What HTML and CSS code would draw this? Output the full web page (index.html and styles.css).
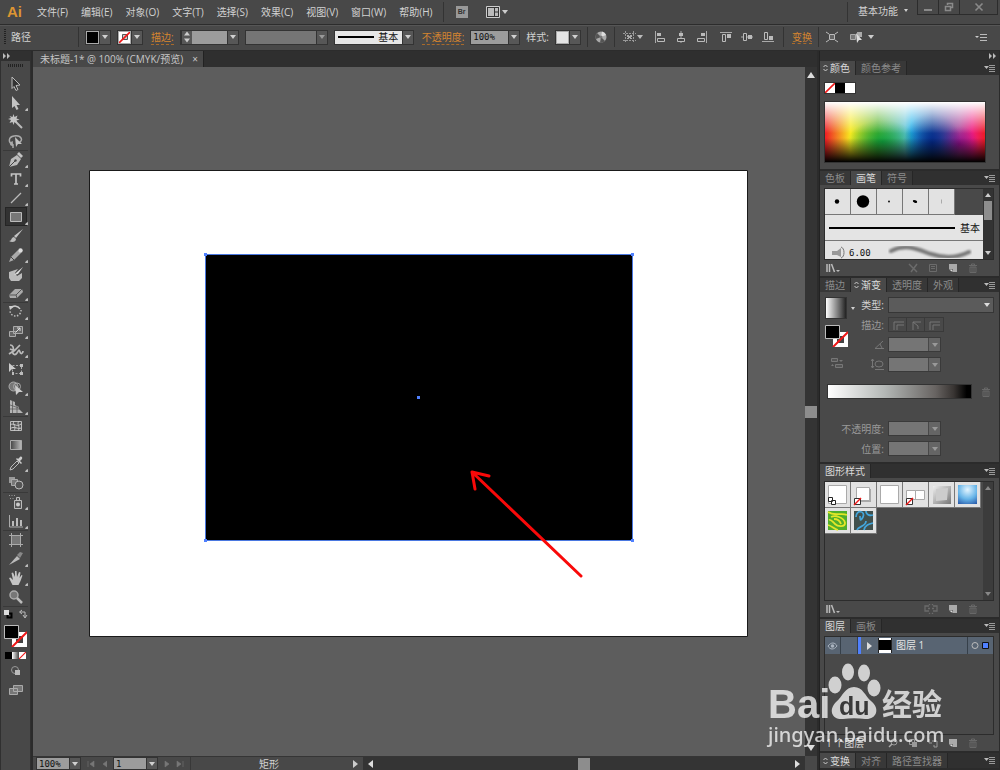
FILE: index.html
```html
<!DOCTYPE html>
<html lang="zh-CN">
<head>
<meta charset="utf-8">
<title>未标题-1</title>
<link rel="stylesheet" href="styles.css">
</head>
<body>
<svg class="sprite" aria-hidden="true">
  <symbol id="flyout" viewBox="0 0 12 8"><path d="M0 2h5L2.500 5z" fill="#bbb"/><path d="M5 1.500h6M5 3.500h6M5 5.500h6M5 7.500h6" stroke="#999"/></symbol>
  <symbol id="updown" viewBox="0 0 5 8"><path d="M.5 3l2-2 2 2M.5 5l2 2 2-2" fill="none" stroke="#ccc"/></symbol>
  <symbol id="library" viewBox="0 0 14 10"><path d="M1 1v8M3.500 1v8M5.500 1l3 8" stroke="#bbb" stroke-width="1.500"/><path d="M10 7h4l-2 2z" fill="#bbb"/></symbol>
  <symbol id="newitem" viewBox="0 0 10 10"><path d="M1 1h8v8H5V6H1z" fill="#aaa"/><path d="M1 6.500h3.500V9z" fill="#ddd"/></symbol>
  <symbol id="trash" viewBox="0 0 10 10"><path d="M1 2.500h8M3.500 2V1h3v1M2 4h6v5.500H2zM4 4v5M6 4v5" fill="none" stroke="#686868"/></symbol>
  <symbol id="link" viewBox="0 0 14 10"><path d="M5 2H1v5h4M9 2h4v5H9M4 4.500h2M8 4.500h2M5 0l1 1M9 0L8 1M5 10l1-1M9 10L8 9" fill="none" stroke="#6b6b6b" stroke-width="1.300"/></symbol>
  <symbol id="none" viewBox="0 0 10 10"><path d="M0 0h10v10H0z" fill="#fff"/><path d="M0 10L10 0" stroke="#f01818" stroke-width="1.600"/></symbol>
  <symbol id="nostroke" viewBox="0 0 12 12"><path d="M0 0h12v12H0z" fill="#fff"/><path d="M3.500 3.500h5v5h-5z" fill="#ccc" stroke="#555"/><path d="M0 12L12 0" stroke="#f01818" stroke-width="1.600"/></symbol>
  <symbol id="paintpair" viewBox="0 0 23 22"><path d="M8 7h15v15H8z" fill="#fff"/><path d="M12 11h7v7h-7z" fill="#444"/><path d="M8 22L23 7" stroke="#f01818" stroke-width="2"/><path d="M.5.5h14v13H.5z" fill="#000" stroke="#bbb"/></symbol>
</svg>

<header class="menubar">
  <strong class="logo">Ai</strong>
  <nav class="menus" aria-label="主菜单">
    <button>文件(F)</button><button>编辑(E)</button><button>对象(O)</button><button>文字(T)</button><button>选择(S)</button><button>效果(C)</button><button>视图(V)</button><button>窗口(W)</button><button>帮助(H)</button>
  </nav>
  <i class="rule"></i>
  <button class="bridge" aria-label="Bridge">Br</button>
  <button class="arrange" aria-label="排列文档"><svg width="22" height="12" viewBox="0 0 22 12"><path d="M.5.5h13v11H.5z" fill="#333" stroke="#ccc"/><path d="M2 2h6v8H2zM9 2h3v3.500H9zM9 6.500h3V10H9z" fill="#bbb"/><path d="M16 4h6l-3 4z" fill="#ccc"/></svg></button>
  <span class="spacer"></span>
  <i class="rule"></i>
  <button class="workspace">基本功能 <i class="tri small"></i></button>
  <div class="window-buttons">
    <button aria-label="最小化"><svg width="10" height="10"><path d="M1 8h8" stroke="#8a8a8a" stroke-width="2"/></svg></button><button aria-label="还原"><svg width="10" height="10"><path d="M3.500 3V1.500h5v4H7M1.500 4.500h5v4h-5z" fill="none" stroke="#8a8a8a" stroke-width="1.500"/></svg></button><button class="close" aria-label="关闭"><svg width="10" height="10"><path d="M1.500 1.500l7 7M8.500 1.500l-7 7" stroke="#8a8a8a" stroke-width="1.600"/></svg></button>
  </div>
</header>

<section class="controls" aria-label="控制">
  <i class="grip"></i>
  <span class="context">路径</span>
  <i class="rule"></i>
  <span class="combo chip"><button class="paint black" aria-label="填色"></button><button class="drop" aria-label="填色选项"><i class="tri"></i></button></span>
  <span class="combo chip"><button class="paint" aria-label="描边颜色"><svg width="12" height="12"><use href="#nostroke"/></svg></button><button class="drop" aria-label="描边选项"><i class="tri"></i></button></span>
  <label class="hot" for="weight"><u>描边:</u></label>
  <span class="combo weight"><button class="drop" aria-label="调整粗细"><svg width="8" height="12"><path d="M1 4.500h6l-3-4zM1 7.500h6l-3 4z" fill="#ccc"/></svg></button><input id="weight" type="text"><button class="drop" aria-label="粗细列表"><i class="tri"></i></button></span>
  <span class="combo profile off"><input type="text" aria-label="变量宽度" disabled><button class="drop" aria-label="宽度列表" disabled><i class="tri"></i></button></span>
  <span class="combo brush"><button class="brush-face"><i></i>基本</button><button class="drop" aria-label="画笔列表"><i class="tri"></i></button></span>
  <label class="hot" for="opacity"><u>不透明度:</u></label>
  <span class="combo opacity"><input id="opacity" type="text" value="100%"><button class="drop" aria-label="不透明度列表"><i class="tri"></i></button></span>
  <span>样式:</span>
  <span class="combo chip"><button class="paint pale" aria-label="样式"></button><button class="drop" aria-label="样式列表"><i class="tri"></i></button></span>
  <i class="rule"></i>
  <button class="ico" aria-label="重新着色"><svg width="14" height="14"><circle cx="7" cy="7" r="5.500" fill="#aaa"/><path d="M7 7L3 3A5.500 5.500 0 0 0 2 9zM7 7l4 4a5.500 5.500 0 0 1-5 1.500z" fill="#555"/><path d="M7 7l1-5.500A5.500 5.500 0 0 1 12 5z" fill="#ddd"/><circle cx="7" cy="7" r="1.500" fill="#777"/></svg></button>
  <i class="rule"></i>
  <button class="ico wide" aria-label="对齐选项"><svg width="20" height="12"><path d="M2.500 0v12M10.500 0v12M0 2.500h13M0 9.500h13" stroke="#999" stroke-dasharray="2 1"/><path d="M4 4h2v1h1V4h2v2H8v1h1v1H7V7H6v1H4V7h1V6H4z" fill="#aaa"/><path d="M14 4h6l-3 4z" fill="#bbb"/></svg></button>
  <div class="align">
    <button class="ico" aria-label="左对齐"><svg width="12" height="12"><path d="M1.500 0v12" stroke="#aaa"/><path d="M3 2h4v3H3z" fill="#bbb"/><path d="M3.500 7.500h7v3h-7z" fill="none" stroke="#bbb"/></svg></button><button class="ico" aria-label="水平居中"><svg width="12" height="12"><path d="M6 0v12" stroke="#aaa"/><path d="M4 2h4v3H4z" fill="#bbb"/><path d="M2.500 7.500h7v3h-7z" fill="#444" stroke="#bbb"/></svg></button><button class="ico" aria-label="右对齐"><svg width="12" height="12"><path d="M10.500 0v12" stroke="#aaa"/><path d="M5 2h4v3H5z" fill="#bbb"/><path d="M1.500 7.500h7v3h-7z" fill="none" stroke="#bbb"/></svg></button>
  </div>
  <div class="align">
    <button class="ico" aria-label="顶对齐"><svg width="12" height="12"><path d="M0 1.500h12" stroke="#aaa"/><path d="M7 3h4v4H7z" fill="#bbb"/><path d="M2.500 3.500h3v7h-3z" fill="none" stroke="#bbb"/></svg></button><button class="ico" aria-label="垂直居中"><svg width="12" height="12"><path d="M0 6h12" stroke="#aaa"/><path d="M7 4h4v4H7z" fill="#bbb"/><path d="M2.500 2.500h3v7h-3z" fill="#444" stroke="#bbb"/></svg></button><button class="ico" aria-label="底对齐"><svg width="12" height="12"><path d="M0 10.500h12" stroke="#aaa"/><path d="M7 5h4v4H7z" fill="#bbb"/><path d="M2.500 1.500h3v7h-3z" fill="none" stroke="#bbb"/></svg></button>
  </div>
  <i class="rule"></i>
  <button class="hot"><u>变换</u></button>
  <i class="rule"></i>
  <button class="ico" aria-label="隔离"><svg width="12" height="12"><path d="M3.500 3.500h5v5h-5z" fill="#666" stroke="#bbb"/><path d="M0 1l3 2M12 1L9 3M0 11l3-2M12 11L9 9" stroke="#bbb"/></svg></button>
  <button class="ico select-like" aria-label="选择类似对象"><svg width="24" height="12"><path d="M.5 3.500h5v5h-5z" fill="#777" stroke="#aaa"/><path d="M7 1h5v5H7z" fill="#aaa"/><path d="M6 2l6 7H9l-2 3z" fill="#ddd"/><path d="M18 4h6l-3 4z" fill="#ccc"/></svg></button>
  <span class="spacer"></span>
  <button class="ico" aria-label="控制面板菜单"><svg width="12" height="8"><path d="M0 3h4L2 5z" fill="#ccc"/><path d="M5 1.500h2M5 4.500h2M5 7.500h2M7 1.500h5M7 4.500h5M7 7.500h5" stroke="#bbb"/></svg></button>
</section>

<main class="work">
  <aside class="toolbox" aria-label="工具">
    <div class="collapse"><svg width="8" height="6"><path d="M0 0l3 3-3 3zM4 0l3 3-3 3z" fill="#bbb"/></svg></div>
    <i class="grip-h"></i>
    <div class="group">
      <button class="tool" aria-label="选择"><svg><path d="M4 1l8 8-4 .5 2 4-2 1-2-4-2 2z" fill="#333" stroke="#bbb"/></svg></button>
      <button class="tool more" aria-label="直接选择"><svg><path d="M4 1l8 9H8.500l2 4-2 1-2-4L4 13z" fill="#c4c4c4"/></svg></button>
      <button class="tool" aria-label="魔棒"><svg><path d="M7 7l7 7" stroke="#bbb" stroke-width="2"/><path d="M5.500 0l1 3 3-1.500L8.500 4.500l3 1-3 1 1 3-3-1.500-1 3-1-3-3 1 1.500-3-3-1 3-1L1.500 2l3 1z" fill="#c4c4c4"/></svg></button>
      <button class="tool" aria-label="套索"><svg><path d="M5 11C0 10 0 4 6 3c8-1 10 5 4 7M5 9c-3 0-3 4 0 3v3" fill="none" stroke="#aaa" stroke-width="1.500"/><path d="M7 4l7 7H10l-2 3z" fill="#c4c4c4"/></svg></button>
    </div>
    <div class="group">
      <button class="tool more" aria-label="钢笔"><svg><path d="M1 15l2-8 6-4 4 4-4 6z" fill="#bbb"/><path d="M1 15l6-6" stroke="#444"/><circle cx="7.500" cy="8.500" r="1.200" fill="#444"/><path d="M9 2l2-2 4 4-2 2z" fill="#c4c4c4"/></svg></button>
      <button class="tool more" aria-label="文字"><svg><path d="M3.500 5.500V3h9v2.500M8 3v10M6 13h4" fill="none" stroke="#c4c4c4" stroke-width="1.700"/></svg></button>
      <button class="tool more" aria-label="直线"><svg><path d="M3 13L13 3" stroke="#bbb" stroke-width="1.200"/></svg></button>
      <button class="tool more active" aria-label="矩形"><svg><path d="M2.500 3.500h11v9h-11z" fill="#777" stroke="#bbb"/></svg></button>
      <button class="tool" aria-label="画笔"><svg><path d="M15 1L8 10 6 8z" fill="#c4c4c4"/><path d="M1 13c3 0 2-4 5-4l2 2c0 3-4 4-7 2z" fill="#bbb"/></svg></button>
      <button class="tool more" aria-label="铅笔"><svg><path d="M1 15l2-5 7-7 3 3-7 7z" fill="#aaa"/><path d="M3 10l3 3" stroke="#444"/><circle cx="12.500" cy="3.500" r="2.200" fill="#ddd"/></svg></button>
      <button class="tool" aria-label="斑点画笔"><svg><path d="M1 6l9-3-3 4 2 3 5-3v5l-3 3H3L1 12z" fill="#bbb"/><path d="M15 1l-6 5-3 3 4-1z" fill="#ddd"/></svg></button>
      <button class="tool more" aria-label="橡皮擦"><svg><path d="M1 10l6-6h7l1 3-6 6H2z" fill="#aaa"/><path d="M1 10h7l6-6M8 10l1 3" stroke="#555" fill="none"/></svg></button>
    </div>
    <div class="group">
      <button class="tool more" aria-label="旋转"><svg><path d="M3 4a5.500 5.500 0 0 1 9 1" fill="none" stroke="#ccc" stroke-width="1.500"/><path d="M13 6a5.500 5.500 0 1 1-11 1" fill="none" stroke="#bbb" stroke-width="1.500" stroke-dasharray="1.500 1.500"/><path d="M1 2l5 0-4 4z" fill="#ccc"/></svg></button>
      <button class="tool more" aria-label="比例缩放"><svg><path d="M1.500 8.500h6v5h-6zM5.500 3.500h9v7h-9z" fill="#666" stroke="#aaa"/><path d="M8 9l4-4M9 5h3v3" stroke="#ddd" fill="none"/></svg></button>
      <button class="tool more" aria-label="宽度"><svg><path d="M2 3c3 0 4 3 3 6s2 5 4 2 2-4 3-1 3 1 3-1M1 12l6-4 5-5M2 7l5 2" fill="none" stroke="#bbb" stroke-width="1.700"/></svg></button>
      <button class="tool" aria-label="自由变换"><svg><path d="M4.500 4.500h9v8h-9z" fill="none" stroke="#aaa" stroke-dasharray="2 1.500"/><path d="M1 2l7 6H4l-3 3z" fill="#ccc"/><path d="M12 3h3v3h-3zM12 11h3v3h-3zM4 11h2v3H4z" fill="#bbb"/></svg></button>
      <button class="tool more" aria-label="形状生成器"><svg><circle cx="5.500" cy="6.500" r="4.500" fill="#777" stroke="#aaa"/><circle cx="9" cy="6.500" r="3.500" fill="none" stroke="#aaa"/><path d="M7 5l8 7h-4l-3 3z" fill="#ccc"/></svg></button>
      <button class="tool more" aria-label="透视网格"><svg><path d="M2 1l5 2v11H2zM7 6l4 2v6H7zM11 10l4 4h-4z" fill="#b4b4b4"/><path d="M4.500 2v12M2 6l9 3M2 10h10M9 6v8" stroke="#555" stroke-width=".7"/></svg></button>
    </div>
    <div class="group">
      <button class="tool" aria-label="网格"><svg><path d="M2.500 3.500h11v9h-11z" fill="#555" stroke="#bbb"/><path d="M2 7c4-3 6 3 11-1M2 11c4-4 8 1 11-1M6 3c-2 4 3 5 0 10M11 3c-3 4 2 5-1 10" fill="none" stroke="#ccc"/></svg></button>
      <button class="tool" aria-label="渐变"><svg><defs><linearGradient id="tg"><stop stop-color="#444"/><stop offset="1" stop-color="#bbb"/></linearGradient></defs><path d="M2.500 3.500h11v9h-11z" fill="url(#tg)" stroke="#aaa"/></svg></button>
      <button class="tool more" aria-label="吸管"><svg><path d="M2 14l1-3 6-6 2 2-6 6z" fill="none" stroke="#bbb"/><path d="M8 3l5 5 1-1-2-2 2-2c1-2-1-3-2-2l-2 2-1-1z" fill="#ccc"/></svg></button>
      <button class="tool" aria-label="混合"><svg><path d="M1 2h6v6H1z" fill="#999"/><path d="M3.500 4.500h6v6h-6z" fill="#777" stroke="#aaa"/><circle cx="11" cy="10" r="4" fill="#555" stroke="#bbb"/></svg></button>
    </div>
    <div class="group">
      <button class="tool more" aria-label="符号喷枪"><svg><path d="M6.500 6.500h7v8h-7zM8.500 3.500h3v3h-3z" fill="#555" stroke="#bbb"/><circle cx="10" cy="10.500" r="2" fill="#ccc"/><path d="M1 1.500h6M2 4.500h5" stroke="#999" stroke-dasharray="1 1.500"/></svg></button>
      <button class="tool more" aria-label="柱形图"><svg><path d="M1.500 2v12H15" fill="none" stroke="#aaa"/><path d="M4 8h2v5H4zM8 5h2v8H8zM12 7h2v6h-2z" fill="#bbb"/></svg></button>
    </div>
    <div class="group">
      <button class="tool" aria-label="画板"><svg><path d="M4 4h8v8H4z" fill="#777"/><path d="M3.500 1v14M12.500 1v14M1 3.500h14M1 12.500h14" stroke="#aaa"/></svg></button>
      <button class="tool more" aria-label="切片"><svg><path d="M1 14l8-9 3 3z" fill="#bbb"/><path d="M9 4l3-3 3 1-3 5z" fill="#888"/></svg></button>
      <button class="tool more" aria-label="抓手"><svg><path d="M4.500 15L1 8l1.500-.5L5 10 3.500 3 5 2.500 7 7l0-6h1.500L9 7l2-5 1.500.5L11.500 8 13.500 5l1 .5L12.500 11l-2 4z" fill="#c4c4c4"/></svg></button>
      <button class="tool" aria-label="缩放"><svg><circle cx="6" cy="6" r="4" fill="#777" stroke="#aaa" stroke-width="1.500"/><path d="M9 9l5 5" stroke="#bbb" stroke-width="2.500"/></svg></button>
    </div>
    <div class="group mini">
      <button aria-label="默认颜色"><svg width="10" height="10"><path d="M4.500 4.500h4v4h-4z" fill="none" stroke="#000" stroke-width="2"/><path d="M1 1h5v5H1z" fill="#ddd"/></svg></button>
      <button aria-label="互换颜色"><svg width="10" height="10"><path d="M2 3h5v5M4 1L1.500 3 4 5M5 6l2 3 2-3" fill="none" stroke="#bbb"/></svg></button>
    </div>
    <button class="paints" aria-label="填色和描边"><svg width="23" height="22"><use href="#paintpair"/></svg></button>
    <div class="modes"><button class="black" aria-label="颜色"></button><button class="ramp" aria-label="渐变填色"></button><button aria-label="无"><svg width="7" height="7"><use href="#none"/></svg></button></div>
    <button class="tool" aria-label="绘图模式"><svg><circle cx="7" cy="7" r="3.500" fill="none" stroke="#999"/><path d="M7 7h5v5H7z" fill="#bbb"/></svg></button>
    <button class="tool" aria-label="屏幕模式"><svg><path d="M1.500 6.500h8v6h-8zM5.500 3.500h9v6h-9z" fill="#777" stroke="#aaa"/></svg></button>
  </aside>

  <section class="document">
    <div class="doc-tabs"><div class="doc-tab">未标题-1* @ 100% (CMYK/预览)<button aria-label="关闭文档">×</button></div></div>
    <div class="canvas">
      <svg class="artboard" width="659" height="467" viewBox="0 0 659 467">
        <path d="M.5.5h658v466H.5z" fill="#fff" stroke="#1a1a1a"/>
        <path d="M116.500 84.500h427v286h-427z" fill="#000" stroke="#4a78e0"/>
        <path d="M115 83h3v3h-3zM542 83h3v3h-3zM115 369h3v3h-3zM542 369h3v3h-3zM328 226h3v3h-3z" fill="#4f80ff"/>
        <path d="M492 406L383 302M386 319l-3-17 17 4" fill="none" stroke="#f90909" stroke-width="3" stroke-linecap="round" stroke-linejoin="round"/>
      </svg>
    </div>
    <div class="vscroll"><svg width="8" height="6"><path d="M0 6h8L4 0z" fill="#ddd"/></svg><i></i><svg width="8" height="6"><path d="M0 0h8L4 6z" fill="#ddd"/></svg></div>
    <footer class="status">
      <span class="combo zoom"><input type="text" value="100%" aria-label="缩放比例"><button class="drop" aria-label="缩放列表"><i class="tri"></i></button></span>
      <button class="nav" aria-label="首个画板"><svg width="20" height="8"><path d="M1 1v6M7 1L3 4l4 3zM20 1l-4 3 4 3z" fill="#777" stroke="#777" stroke-width=".6"/></svg></button>
      <span class="combo page"><input type="text" value="1" aria-label="画板编号"><button class="drop" aria-label="画板列表"><i class="tri"></i></button></span>
      <button class="nav" aria-label="末个画板"><svg width="20" height="8"><path d="M1 1l4 3-4 3zM13 1l4 3-4 3zM19 1v6" fill="#777" stroke="#777" stroke-width=".6"/></svg></button>
      <span class="current">矩形</span>
      <button class="go" aria-label="状态菜单"><svg width="5" height="8"><path d="M0 0l5 4-5 4z" fill="#ccc"/></svg></button>
      <div class="hscroll"><svg width="5" height="8"><path d="M5 0L0 4l5 4z" fill="#ddd"/></svg><i></i><svg width="5" height="8"><path d="M0 0l5 4-5 4z" fill="#ddd"/></svg></div>
    </footer>
    <i class="corner"></i>
  </section>

  <aside class="dock">
    <div class="collapse right"><svg width="8" height="6"><path d="M0 0l3 3-3 3zM4 0l3 3-3 3z" fill="#bbb"/></svg></div>

    <section class="panel color">
      <div class="tabs"><button class="on"><svg width="5" height="8"><use href="#updown"/></svg>颜色</button><button>颜色参考</button><svg class="fly" width="12" height="8"><use href="#flyout"/></svg></div>
      <div class="body">
        <div class="quick"><svg width="10" height="10"><use href="#none"/></svg><i class="black"></i><i class="white"></i></div>
        <div class="spectrum"></div>
      </div>
    </section>

    <section class="panel brushes">
      <div class="tabs"><button>色板</button><button class="on">画笔</button><button>符号</button><svg class="fly" width="12" height="8"><use href="#flyout"/></svg></div>
      <div class="body">
        <div class="well">
          <div class="list">
            <div class="cells">
              <button aria-label="5 点圆形"><svg><circle cx="12" cy="12.500" r="2.200"/></svg></button><button aria-label="15 点圆形"><svg><circle cx="12" cy="12.500" r="6.200"/></svg></button><button aria-label="1 点圆形"><svg><circle cx="12" cy="12.500" r=".9"/></svg></button><button aria-label="扁平"><svg><ellipse cx="12" cy="12.500" rx="2.300" ry="1.200" transform="rotate(20 12 12.500)"/></svg></button><button aria-label="细点"><svg><path d="M12.500 10.500v4" stroke="#aaa"/></svg></button>
            </div>
            <div class="basic"><i></i>基本</div>
            <div class="charcoal"><svg width="15" height="14"><path d="M1 5h5l4-3v9L6 9H1z" fill="#999"/><path d="M10 1c4 1 4 10 0 11" fill="none" stroke="#777"/></svg><span>6.00</span><svg width="84" height="16"><defs><filter id="soft"><feGaussianBlur stdDeviation=".8"/></filter></defs><path d="M3 6c16-8 28-1 40 3s26 4 38-2" fill="none" stroke="#777" stroke-width="4" stroke-linecap="round" filter="url(#soft)"/></svg></div>
          </div>
          <div class="bar"><i class="up"></i><b></b><i class="down"></i></div>
        </div>
        <div class="foot"><svg width="14" height="10"><use href="#library"/></svg><span class="spacer"></span><svg width="10" height="10"><path d="M1 1l4 4M9 1L3 9M5 5l4 4" stroke="#6b6b6b" stroke-width="1.500"/></svg><svg width="10" height="10"><path d="M1.500 1.500h7v7h-7zM3 3.500h4M3 5.500h4" fill="none" stroke="#6b6b6b"/></svg><svg width="10" height="10"><use href="#newitem"/></svg><svg width="10" height="10"><use href="#trash"/></svg></div>
      </div>
    </section>

    <section class="panel gradient">
      <div class="tabs"><button>描边</button><button class="on"><svg width="5" height="8"><use href="#updown"/></svg>渐变</button><button>透明度</button><button>外观</button><svg class="fly" width="12" height="8"><use href="#flyout"/></svg></div>
      <div class="body">
        <div class="fields">
          <div class="preview"><span class="thumb"><i></i><i class="tri small"></i></span><svg width="23" height="22"><use href="#paintpair"/></svg><svg class="reverse" width="14" height="12"><path d="M1.500 1.500h6v3h-6zM5.500 7.500h7v3h-7z" fill="#555" stroke="#777"/><path d="M9 3h4l-2 2zM1 9h3L2.500 7z" fill="#777"/></svg></div>
          <div class="rows">
            <label for="kind" class="lit">类型:</label><span class="select"><select id="kind"><option></option><option>线性</option><option>径向</option></select></span>
            <span>描边:</span><span class="trio"><button aria-label="描边内" disabled><svg width="12" height="10"><path d="M2 10V2h10M5 10V5h7" fill="none" stroke="#777"/></svg></button><button aria-label="沿描边" disabled><svg width="12" height="10"><path d="M3 10V2h8M3 2l5 4v3" fill="none" stroke="#777"/></svg></button><button aria-label="跨描边" disabled><svg width="12" height="10"><path d="M2 10V2h10M5 10V5h7" fill="none" stroke="#777"/></svg></button></span>
            <label for="angle" aria-label="角度"><svg width="10" height="8"><path d="M9 0L1 7.500h9M6 3l2 4" fill="none" stroke="#777"/></svg></label><span class="combo off"><input id="angle" type="text" disabled><button class="drop" aria-label="角度列表" disabled><i class="tri"></i></button></span>
            <label for="ratio" aria-label="长宽比"><svg width="13" height="11"><ellipse cx="8" cy="5" rx="4" ry="3" fill="none" stroke="#777"/><path d="M1.500 0v9M0 2l1.500-2L3 2M0 7l1.500 2L3 7M4 10.500h9" fill="none" stroke="#777"/></svg></label><span class="combo off"><input id="ratio" type="text" disabled><button class="drop" aria-label="长宽比列表" disabled><i class="tri"></i></button></span>
          </div>
        </div>
        <div class="slider"><i></i><svg width="10" height="10"><use href="#trash"/></svg></div>
        <div class="rows stops">
          <label for="stop-opacity">不透明度:</label><span class="combo off"><input id="stop-opacity" type="text" disabled><button class="drop" aria-label="不透明度列表" disabled><i class="tri"></i></button></span>
          <label for="stop-pos">位置:</label><span class="combo off"><input id="stop-pos" type="text" disabled><button class="drop" aria-label="位置列表" disabled><i class="tri"></i></button></span>
        </div>
      </div>
    </section>

    <section class="panel styles">
      <div class="tabs"><button class="on">图形样式</button><svg class="fly" width="12" height="8"><use href="#flyout"/></svg></div>
      <div class="body">
        <div class="well">
          <div class="list">
            <div class="cells">
              <button aria-label="默认"><svg><path d="M3.500 3.500h18v18h-18z" fill="#fff" stroke="#aaa"/><path d="M6.500 18.500h4v4h-4zM3.500 15.500h4v4h-4z" fill="#fff" stroke="#222"/></svg></button><button aria-label="投影"><svg><path d="M7 7h13v13H7z" fill="#aaa"/><path d="M5.500 5.500h13v13h-13z" fill="#fff" stroke="#aaa"/><path d="M3.500 16.500h6v6h-6z" fill="#fff" stroke="#333"/><path d="M3 23l7-7" stroke="#f01818" stroke-width="1.500"/></svg></button><button aria-label="圆角"><svg><path d="M3.500 3.500h18v18h-18z" fill="#fff" stroke="#aaa"/></svg></button><button aria-label="实时对称"><svg><path d="M3.500 8.500h9v9h-9zM12.500 8.500h9v9h-9z" fill="#fff" stroke="#aaa"/><path d="M3.500 16.500h6v6h-6z" fill="#fff" stroke="#333"/><path d="M3 23l7-7" stroke="#f01818" stroke-width="1.500"/></svg></button><button aria-label="浮雕"><svg><defs><linearGradient id="em" x2="1" y2="1"><stop stop-color="#eee"/><stop offset="1" stop-color="#777"/></linearGradient></defs><path d="M4 4h18v18H4z" fill="url(#em)"/><path d="M7 7l12-1-1 12-11 1z" fill="#ccc"/></svg></button><button aria-label="蓝色发光"><svg><defs><radialGradient id="bl" cy=".25" r=".9"><stop stop-color="#e4f5ff"/><stop offset=".55" stop-color="#67b5e8"/><stop offset="1" stop-color="#2454a5"/></radialGradient></defs><path d="M3 3h19v19H3z" fill="url(#bl)"/></svg></button><button aria-label="植物"><svg><path d="M3 3h19v19H3z" fill="#4fae2c"/><path d="M3 4c7 5 13 0 19 3M6 9c4-2 13 0 14 6 0 4-7 4-10 1s-4-5-6-4M9 11c3 0 6 2 7 5M3 17c4 1 6 4 10 5" fill="none" stroke="#e3e629" stroke-width="1.800"/></svg></button><button aria-label="漩涡"><svg><path d="M3 3h19v19H3z" fill="#40504d"/><path d="M5 9c0-8 10-6 7 0s-3 1-3-1M6 22c1-4 9-3 9-9M13 22c1-5 5-6 9-7M15 3c0 4 4 5 7 4" fill="none" stroke="#43a6dc" stroke-width="1.700"/></svg></button>
            </div>
          </div>
          <div class="bar idle"><i class="up"></i><i class="down"></i></div>
        </div>
        <div class="foot"><svg width="14" height="10"><use href="#library"/></svg><span class="spacer"></span><svg width="14" height="10"><use href="#link"/></svg><svg width="10" height="10"><use href="#newitem"/></svg><svg width="10" height="10"><use href="#trash"/></svg></div>
      </div>
    </section>

    <section class="panel layers">
      <div class="tabs"><button class="on">图层</button><button>画板</button><svg class="fly" width="12" height="8"><use href="#flyout"/></svg></div>
      <div class="body">
        <div class="well">
          <div class="layer">
            <button class="eye" aria-label="切换可视性"><svg width="11" height="8"><path d="M1 4c3-4 7-4 9 0-3 4-7 4-9 0z" fill="none" stroke="#aab4c0"/><circle cx="5.500" cy="4" r="1.800" fill="#aab4c0"/></svg></button><span class="lock"></span><i class="tint"></i><button class="twist" aria-label="展开"><svg width="5" height="8"><path d="M0 0l5 4-5 4z" fill="#ddd"/></svg></button><i class="mini-art"></i><span class="name">图层 1</span><span class="target"><svg width="18" height="9"><circle cx="4" cy="4.500" r="3" fill="none" stroke="#bbb"/><path d="M12.500 1.500h6v6h-6z" fill="#4f80ff" stroke="#111" transform="translate(-1)"/></svg></span>
          </div>
        </div>
        <div class="foot"><span class="count">1 个图层</span><span class="spacer"></span><svg width="10" height="10"><circle cx="6" cy="4" r="3" fill="none" stroke="#999"/><path d="M4 6L1 9" stroke="#aaa" stroke-width="1.500"/></svg><svg width="10" height="10"><path d="M1.500 1.500h5v5h-5z" fill="none" stroke="#999"/><path d="M4 4h5v5H4z" fill="#999"/></svg><svg width="10" height="10"><path d="M1 1v4h3M4 3h5v6H6V7" fill="none" stroke="#999"/></svg><svg width="10" height="10"><use href="#newitem"/></svg><svg width="10" height="10"><use href="#trash"/></svg></div>
      </div>
    </section>

    <section class="panel last">
      <div class="tabs"><button class="on"><svg width="5" height="8"><use href="#updown"/></svg>变换</button><button>对齐</button><button>路径查找器</button><svg class="fly" width="12" height="8"><use href="#flyout"/></svg></div>
    </section>
  </aside>
</main>

<svg class="watermark" width="180" height="90" viewBox="0 0 180 90">
  <g fill="#fff">
    <text class="wm-bold" x="0" y="57">Bai</text>
    <ellipse cx="67" cy="24" rx="6.500" ry="8.500"/><ellipse cx="80" cy="11" rx="6" ry="8.500"/><ellipse cx="96" cy="12" rx="6" ry="8.500"/><ellipse cx="106" cy="27" rx="6.500" ry="8.500"/>
    <path d="M86 26c9 0 11 9 17 14 10 8 5 19-6 18-7-1-15-1-22 0-11 1-15-9-7-17 7-6 9-15 18-15z"/>
    <text class="wm-cjk" x="114" y="54">经验</text>
    <text class="wm-url" x="0" y="81">jingyan.baidu.com</text>
  </g>
  <text class="wm-du" x="71" y="54">du</text>
</svg>
</body>
</html>
```
FILE: styles.css
```css
* { box-sizing: border-box; }
body {
  margin: 0;
  height: 100vh;
  display: flex;
  flex-direction: column;
  overflow: hidden;
  position: relative;
  background: #484848;
  color: #d2d2d2;
  font: 10px/14px "Open Sans", "Noto Sans CJK SC", sans-serif;
}
button, input, select {
  font: inherit;
  color: inherit;
  background: none;
  border: 0;
  padding: 0;
  margin: 0;
  min-width: 0;
  border-radius: 0;
}
button { display: inline-flex; align-items: center; justify-content: center; white-space: nowrap; }
svg { display: block; flex: none; }
i, b { display: block; font-style: normal; flex: none; }
.sprite { position: absolute; width: 0; height: 0; }
.spacer { flex: 1; }
.black { background: #000; }
.white { background: #fff; }
.tri {
  width: 0;
  height: 0;
  border: 3px solid transparent;
  border-top: 4px solid #d0d0d0;
  border-bottom: 0;
}
.tri.small { border-width: 3px 2px 0; }
.rule { width: 1px; height: 20px; background: #333; }

/* menu bar */
.menubar {
  height: 25px;
  flex: none;
  display: flex;
  align-items: center;
  padding: 0 2px 0 7px;
  border-bottom: 1px solid #2c2c2c;
}
.logo { color: #dc9532; font: bold 15px/20px "Liberation Sans", sans-serif; width: 30px; }
.menus { display: flex; gap: 13px; margin-right: 10px; }
.bridge {
  width: 12px;
  height: 12px;
  margin-left: 12px;
  background: #999;
  color: #333;
  font: bold 7px/12px "Liberation Sans", sans-serif;
}
.arrange { margin-left: 18px; }
.workspace { margin: 0 9px 3px 10px; gap: 6px; }
.window-buttons { display: flex; align-self: flex-start; border: 1px solid #2c2c2c; border-top: 0; }
.window-buttons button { width: 21px; height: 14px; border-right: 1px solid #2c2c2c; }
.window-buttons .close { width: 37px; border: 0; }

/* control bar */
.controls {
  height: 26px;
  flex: none;
  display: flex;
  align-items: center;
  gap: 6px;
  padding: 0 12px 2px 4px;
  border-top: 1px solid #565656;
  border-bottom: 1px solid #2c2c2c;
  white-space: nowrap;
}
.grip { width: 2px; height: 16px; margin-right: -1px; background: repeating-linear-gradient(#222 0 1px, #484848 1px 2px); }
.context { width: 61px; }
.hot { color: #d58530; padding-left: 2px; line-height: 12px; }
.hot u { text-decoration: none; border-bottom: 1px dashed #a86a2a; }
.combo { display: flex; height: 15px; border: 1px solid #333; background: #9c9c9c; color: #111; }
.combo input { flex: 1; width: 0; padding-left: 2px; font: 9px/12px "DejaVu Sans Mono", monospace; }
.drop { width: 11px; flex: none; background: #575757; border-left: 1px solid #333; }
.off { background: #757575; }
.off .tri { border-top-color: #999; }
.chip { width: 26px; }
.paint { flex: 1; border: 1px solid #aaa; overflow: hidden; }
.paint.pale { background: #e4e4e4; }
.weight { width: 59px; }
.profile { width: 83px; }
.brush { width: 80px; background: #e6e6e6; }
.brush-face { flex: 1; gap: 4px; }
.brush-face i { width: 36px; height: 2px; background: #000; }
.controls .opacity { width: 50px; }
.ico { width: 14px; height: 14px; }
.ico.wide { width: 24px; }
.select-like { width: 24px; margin-left: 5px; }
.align { display: flex; gap: 7px; padding: 0 2px; }

.work { flex: 1; min-height: 0; display: flex; background: #2b2b2b; }

/* toolbox */
.toolbox { width: 31px; flex: none; display: flex; flex-direction: column; align-items: center; background: #484848; border: 1px solid #303030; border-width: 0 1px; }
.collapse { align-self: stretch; height: 10px; flex: none; background: #303030; padding: 2px; }
.collapse.right { display: flex; justify-content: flex-end; padding-right: 2px; }
.grip-h { width: 16px; height: 3px; margin: 3px 0 7px; background: repeating-linear-gradient(90deg, #222 0 1px, #484848 1px 2px); }
.group { display: flex; flex-direction: column; align-items: center; width: 25px; box-shadow: 0 1px #393939; flex: none; }
.tool { width: 22px; height: 19px; position: relative; flex: none; }
.tool svg { width: 16px; height: 16px; }
.tool.active { background: #323232; outline: 1px solid #252525; outline-offset: -1px; }
.tool.more::after {
  content: "";
  position: absolute;
  right: -1px;
  bottom: 1px;
  border: 2px solid #bbb;
  border-width: 1px 2px 2px 1px;
  border-top-color: transparent;
  border-left-color: transparent;
}
.group.mini { flex-direction: row; justify-content: space-between; height: 16px; box-shadow: none; }
.paints { margin: 3px 0 5px; }
.modes { display: flex; width: 21px; margin-bottom: 2px; }
.modes button { width: 7px; height: 7px; }
.modes .ramp { background: linear-gradient(90deg, #fff, #444); }

/* document */
.document {
  flex: 1;
  min-width: 0;
  margin: 0 2px;
  display: grid;
  grid-template: 16px minmax(0, 1fr) 14px / minmax(0, 1fr) 12px;
}
.doc-tabs { grid-column: 1 / 3; background: #2f2f2f; display: flex; }
.doc-tab { display: flex; align-items: center; gap: 9px; padding: 0 5px 0 7px; background: #484848; color: #c6c6c6; border-right: 1px solid #222; }
.canvas { background: #5d5d5d; display: flex; align-items: center; justify-content: center; padding: 0 2px 16px 0; overflow: hidden; }
.vscroll { background: #343434; display: flex; flex-direction: column; align-items: center; justify-content: space-between; padding: 5px 0; }
.vscroll i { width: 12px; height: 12px; background: #8d8d8d; }
.status { display: flex; align-items: center; background: #484848; border-top: 1px solid #353535; padding-left: 3px; }
.status .combo { height: 13px; }
.zoom { width: 45px; }
.page { width: 45px; }
.nav { width: 32px; }
.current { flex: 1; text-align: center; border-left: 1px solid #383838; }
.go { width: 16px; }
.hscroll { width: 442px; height: 13px; display: flex; align-items: center; justify-content: space-between; background: #343434; padding: 0 5px; }
.hscroll i { width: 12px; height: 12px; background: #8d8d8d; }
.corner { background: #484848; }

/* dock */
.dock { width: 181px; flex: none; display: flex; flex-direction: column; gap: 2px; border-left: 1px solid #222; padding-right: 1px; }
.dock .collapse { margin-bottom: -2px; }
.panel { display: flex; flex-direction: column; flex: none; }
.body { flex: 1; min-height: 0; background: #494949; display: flex; flex-direction: column; padding: 3px 5px 0 4px; }
.tabs { height: 14px; flex: none; display: flex; background: #303030; align-items: stretch; }
.tabs button { color: #8b8b8b; background: #383838; border-right: 1px solid #262626; padding: 0 5px; gap: 2px; line-height: 14px; }
.tabs button.on { background: #494949; color: #dadada; }
.tabs button:has(svg) { padding-left: 3px; }
.fly { margin: 3px 3px 0 auto; }
.color { height: 108px; }
.color .body { padding-top: 7px; gap: 8px; }
.quick { display: flex; border: 1px solid #333; align-self: flex-start; }
.quick i { width: 10px; height: 10px; }
.spectrum {
  height: 60px;
  margin: 0 9px 0 1px;
  outline: 1px solid #333;
  background:
    linear-gradient(#fff, rgba(255,255,255,0) 52%, rgba(0,0,0,0) 60%, #000),
    radial-gradient(ellipse 18% 50% at 67% 68%, rgba(0,35,130,.85), rgba(0,35,130,0)),
    radial-gradient(ellipse 22% 36% at 36% 66%, rgba(0,155,60,.8), rgba(0,155,60,0)),
    radial-gradient(ellipse 12% 30% at 84% 70%, rgba(140,0,130,.8), rgba(140,0,130,0)),
    linear-gradient(90deg, #ee1c25, #f7ea20 16%, #5ab52b 33%, #63c4d5 50%, #24b4ec 54%, #1a4ca2 67%, #a9479b 84%, #ee1e80 92%, #ee1c25);
}
.well { flex: 1; min-height: 0; display: flex; border: 1px solid #2c2c2c; overflow: hidden; }
.list { flex: 1; min-width: 0; }
.cells { display: flex; flex-wrap: wrap; }
.cells button { width: 26px; height: 26px; background: #e2e2e2; border: 1px solid #777; border-width: 0 1px 1px 0; }
.cells svg { width: 25px; height: 25px; }
.bar { width: 10px; display: flex; flex-direction: column; align-items: center; background: #333; padding: 4px 0; }
.bar b { width: 8px; height: 19px; margin-top: 4px; background: #8d8d8d; }
.up { border: 3px solid transparent; border-bottom: 4px solid #ccc; border-top: 0; }
.down { border: 3px solid transparent; border-top: 4px solid #ccc; border-bottom: 0; margin-top: auto; }
.idle { background: #3c3c3c; }
.idle .up { border-bottom-color: #888; }
.idle .down { border-top-color: #888; }
.foot { height: 16px; flex: none; display: flex; align-items: center; gap: 10px; padding: 0 16px 0 2px; }

.brushes { height: 105px; }
.basic, .charcoal { display: flex; align-items: center; width: 159px; height: 26px; background: #e4e4e4; color: #111; padding: 0 4px; border-bottom: 1px solid #777; }
.basic { gap: 5px; }
.basic i { flex: 1; height: 2px; background: #000; }
.charcoal { padding: 0 12px 2px 6px; gap: 3px; font: 9px/12px "DejaVu Sans Mono", monospace; justify-content: space-between; }
.charcoal span { margin-right: auto; }

.gradient { height: 184px; }
.gradient .body { padding-top: 5px; }
.fields { display: flex; }
.preview { width: 33px; display: flex; flex-direction: column; gap: 6px; padding-left: 1px; }
.thumb { display: flex; align-items: center; gap: 4px; }
.thumb i:first-child { width: 22px; height: 22px; border: 1px solid #333; background: linear-gradient(90deg, #fff, #222); }
.reverse { margin: 4px 0 0 5px; }
.rows { flex: 1; display: grid; grid-template-columns: 27px 106px; column-gap: 4px; row-gap: 5px; align-items: center; justify-items: start; color: #999; }
.rows > :nth-child(odd) { justify-self: end; white-space: nowrap; }
.rows .lit { color: #d2d2d2; }
.rows .combo { width: 53px; border-color: #3a3a3a; }
.rows .combo .drop { width: 12px; background: #656565; border-color: #484848; }
.select { display: grid; width: 100%; height: 15px; }
.select select { grid-area: 1 / 1; appearance: none; background: #5b5b5b; border: 1px solid #363636; width: 100%; }
.select::after { content: ""; grid-area: 1 / 1; place-self: center end; margin-right: 4px; border: 3px solid transparent; border-top: 4px solid #ddd; border-bottom: 0; pointer-events: none; }
.trio { display: flex; height: 15px; border: 1px solid #3a3a3a; }
.trio button { width: 18px; border-right: 1px solid #3a3a3a; }
.trio button:last-child { border-right: 0; }
.slider { display: flex; align-items: center; gap: 9px; margin: 12px 0 22px 3px; }
.slider i { width: 145px; height: 15px; border: 1px solid #333; background: linear-gradient(90deg, #fff, #b3b7b5 40%, #686462 75%, #383432 88%, #000 97%); }
.rows.stops { flex: none; grid-template-columns: 60px 106px; }

.styles { height: 153px; }
.layers { flex: 1; min-height: 0; }
.layers .well { flex: 1; }
.layer { flex: 1; height: 17px; display: flex; align-items: stretch; background: #586472; color: #e4e4e4; }
.eye { width: 16px; border-right: 1px solid #36404a; }
.lock { width: 17px; border-right: 1px solid #36404a; }
.tint { width: 3px; background: #4f80ff; }
.twist { width: 17px; }
.mini-art { width: 14px; margin: 1px 4px 1px 0; background: linear-gradient(#fff 0 2px, #000 2px 12px, #fff 12px); border: 1px solid #222; border-width: 0 1px; }
.name { flex: 1; line-height: 17px; }
.target { display: flex; align-items: center; padding: 0 4px 0 3px; border-left: 1px solid #36404a; }
.layers .foot { white-space: nowrap; }
.last { height: 17px; }
.last .tabs { height: 15px; }

.watermark { position: absolute; right: 52px; bottom: 19px; opacity: .74; pointer-events: none; overflow: visible; }
.wm-bold { font: bold 40px "Liberation Sans", sans-serif; }
.wm-cjk { font: bold 30px "Noto Sans CJK SC", sans-serif; }
.wm-url { font: 500 20px "Noto Sans", sans-serif; }
.wm-du { font: bold 25px "Liberation Sans", sans-serif; fill: #333; }
```
